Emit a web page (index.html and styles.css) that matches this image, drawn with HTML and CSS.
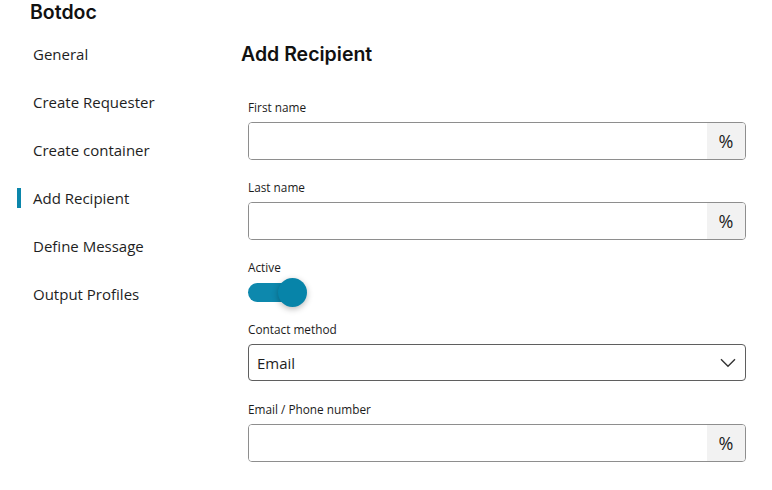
FILE: index.html
```html
<!DOCTYPE html>
<html lang="en">
<head>
<meta charset="utf-8">
<title>Botdoc - Add Recipient</title>
<link rel="stylesheet" href="styles.css">
</head>
<body>
<div class="app">
  <aside class="sidebar">
    <div class="brand">Botdoc</div>
    <nav class="nav">
      <div class="nav-item">General</div>
      <div class="nav-item">Create Requester</div>
      <div class="nav-item">Create container</div>
      <div class="nav-item active">Add Recipient</div>
      <div class="nav-item">Define Message</div>
      <div class="nav-item">Output Profiles</div>
    </nav>
  </aside>
  <main class="main">
    <h1 class="title">Add Recipient</h1>
    <form class="form">
      <div class="field">
        <label class="label">First name</label>
        <div class="input-group">
          <input class="input" type="text">
          <span class="suffix">%</span>
        </div>
      </div>
      <div class="field">
        <label class="label">Last name</label>
        <div class="input-group">
          <input class="input" type="text">
          <span class="suffix">%</span>
        </div>
      </div>
      <div class="field field-toggle">
        <label class="label">Active</label>
        <div class="toggle-wrap">
          <div class="toggle">
            <span class="thumb"></span>
          </div>
        </div>
      </div>
      <div class="field">
        <label class="label">Contact method</label>
        <div class="select">
          <span class="select-value">Email</span>
          <svg class="chevron" width="16" height="10" viewBox="0 0 16 10"><path d="M1 1.2 L8 8.2 L15 1.2" fill="none" stroke="#333" stroke-width="1.4"/></svg>
        </div>
      </div>
      <div class="field">
        <label class="label">Email / Phone number</label>
        <div class="input-group">
          <input class="input" type="text">
          <span class="suffix">%</span>
        </div>
      </div>
    </form>
  </main>
</div>
</body>
</html>
```
FILE: styles.css
```css
* { box-sizing: border-box; }
html, body { margin: 0; padding: 0; background: #fff; }
body {
  font-family: "Open Sans", "Liberation Sans", sans-serif;
  color: #1b1b1b;
}
.app {
  display: flex;
  width: 772px;
  height: 490px;
}
.sidebar {
  width: 241px;
  flex: none;
}
.brand {
  height: 30px;
  padding-left: 30px;
  font-family: Inter, "Open Sans", sans-serif;
  font-weight: 600;
  font-size: 19.5px;
  line-height: 25px;
  color: #111;
}
.nav {
  display: flex;
  flex-direction: column;
}
.nav-item {
  position: relative;
  height: 48px;
  line-height: 48px;
  padding-left: 33px;
  font-size: 15px;
  color: #1e1e1e;
}
.nav-item.active::before {
  content: "";
  position: absolute;
  left: 17px;
  top: 14px;
  width: 4px;
  height: 20px;
  background: #0b86ab;
}
.main {
  flex: 1;
  padding-right: 26px;
}
.title {
  margin: 30px 0 0 0;
  height: 48px;
  line-height: 49px;
  font-family: Inter, "Open Sans", sans-serif;
  font-weight: 600;
  font-size: 19.5px;
  color: #111;
}
.form {
  padding: 21px 0 0 7px;
  display: flex;
  flex-direction: column;
}
.field {
  display: flex;
  flex-direction: column;
  margin-bottom: 19px;
}
.label {
  height: 16px;
  line-height: 16px;
  font-size: 11.8px;
  color: #1b1b1b;
  margin-bottom: 7px;
}
.input-group {
  display: flex;
  height: 38px;
  border: 1px solid #8e8e8e;
  border-radius: 4px;
  overflow: hidden;
}
.input {
  flex: 1;
  border: 0;
  outline: none;
  padding: 0 9px;
  font: inherit;
  background: #fff;
}
.suffix {
  width: 38px;
  flex: none;
  display: flex;
  align-items: center;
  justify-content: center;
  background: #f2f2f2;
  font-size: 18px;
  font-weight: 400;
  color: #1e1e1e;
}
.field-toggle { margin-bottom: 12px; }
.field-toggle .label { margin-bottom: 0; }
.toggle-wrap {
  height: 34px;
  display: flex;
  align-items: center;
}
.toggle {
  position: relative;
  width: 54px;
  height: 19px;
  border-radius: 10px;
  background: #0d88ad;
}
.thumb {
  position: absolute;
  left: 30px;
  top: -5px;
  width: 29px;
  height: 29px;
  border-radius: 50%;
  background: #0784a9;
  box-shadow: 0 2px 6px rgba(0, 0, 0, 0.28);
}
.select {
  display: flex;
  align-items: center;
  justify-content: space-between;
  height: 37px;
  border: 1px solid #5f5f5f;
  border-radius: 4px;
  padding: 1px 9px 0 8px;
  margin-bottom: 1px;
}
.select-value {
  font-size: 15px;
  color: #1e1e1e;
}
.chevron { display: block; }
```
